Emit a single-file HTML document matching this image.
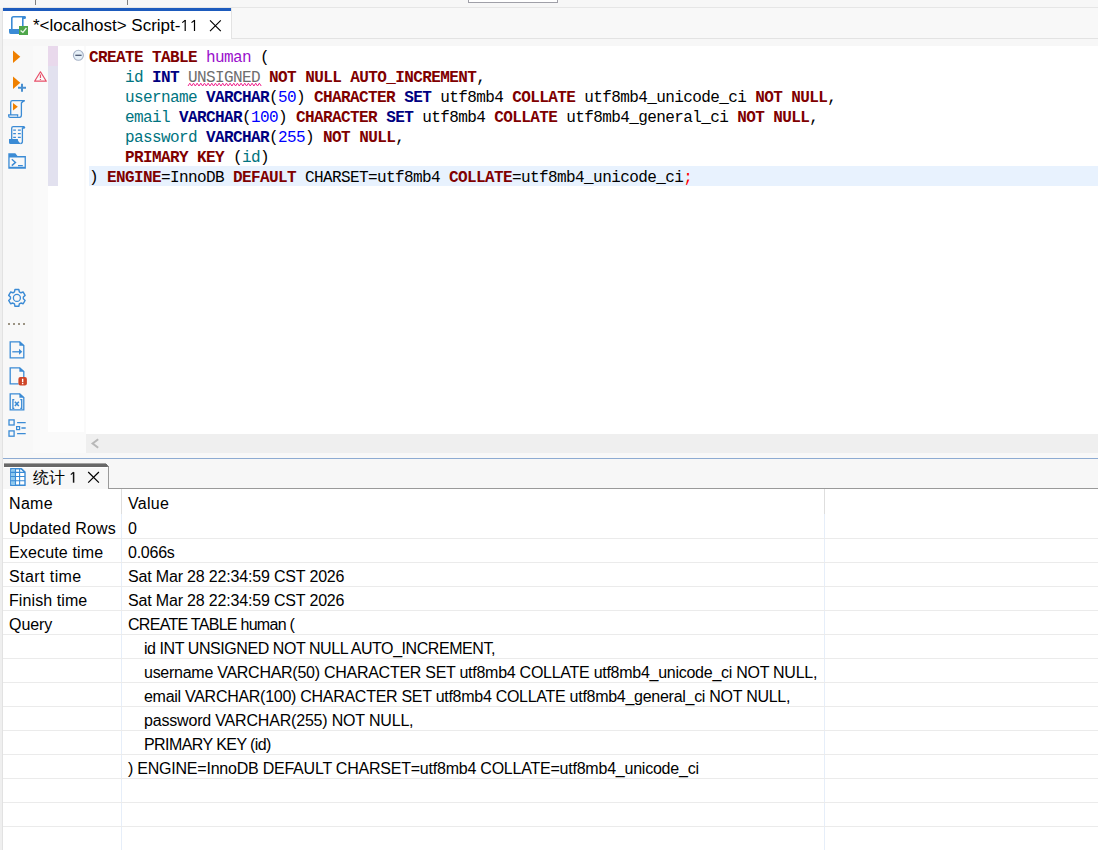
<!DOCTYPE html>
<html><head><meta charset="utf-8">
<style>
*{margin:0;padding:0;box-sizing:border-box}
html,body{width:1098px;height:850px;overflow:hidden;background:#f7f7f7;font-family:"Liberation Sans",sans-serif}
.a{position:absolute}
.code{font-family:"Liberation Mono",monospace;font-size:16px;letter-spacing:-0.6px;line-height:20px;white-space:pre;color:#000}
.k{color:#800000;font-weight:bold}
.t{color:#000080;font-weight:bold}
.c{color:#007480}
.n{color:#0000ff}
.p{color:#9a10cc}
.g{color:#6e6e6e}
.hl{left:3px;width:1095px;height:1px;background:#ebebeb}
.cell{font-size:16px;letter-spacing:-0.25px;line-height:20px;white-space:pre;color:#000}
</style></head><body>
<!-- top strip -->
<div class="a" style="left:0;top:0;width:1098px;height:8px;background:#f7f7f7"></div>
<div class="a" style="left:35px;top:0;width:1px;height:5px;background:#808080"></div>
<div class="a" style="left:127px;top:0;width:1px;height:5px;background:#808080"></div>
<div class="a" style="left:468px;top:0;width:90px;height:3px;background:#fff;border:1px solid #a0a0a8;border-top:none"></div>
<!-- left strip -->
<div class="a" style="left:0;top:8px;width:2px;height:842px;background:#efefef"></div>
<div class="a" style="left:2px;top:8px;width:1px;height:842px;background:#e2e2e2"></div>
<!-- tab bar -->
<div class="a" style="left:3px;top:7px;width:1095px;height:1px;background:#e6e6e6"></div>
<div class="a" style="left:3px;top:8px;width:1095px;height:31px;background:#f8f8f8;border-bottom:1px solid #e3e3e3"></div>
<div class="a" style="left:3px;top:8px;width:229px;height:31px;background:#fff;border-right:1px solid #e3e3e3"></div>
<div class="a" style="left:3px;top:8px;width:228px;height:3px;background:#1d5bbd"></div>
<div class="a" style="left:33px;top:16px;font-size:17px;letter-spacing:0px;line-height:20px;white-space:pre;color:#000">*&lt;localhost&gt; Script-</div>
<svg class="a" style="left:0;top:0" width="1098" height="850"><path d="M185.2 20 V30.9 M194.5 20 V30.9" stroke="#000" stroke-width="1.2"/><path d="M185.4 20.2 L182.2 22.6 M194.7 20.2 L191.5 22.6" stroke="#000" stroke-width="1.15"/></svg>
<!-- gray band -->
<div class="a" style="left:3px;top:39px;width:1095px;height:7px;background:#f7f7f7"></div>
<!-- editor -->
<div class="a" style="left:3px;top:46px;width:30px;height:407px;background:#f8f8f8"></div>
<div class="a" style="left:33px;top:46px;width:15px;height:388px;background:#fafafa"></div>
<div class="a" style="left:48px;top:46px;width:10px;height:20px;background:#e9d9ec"></div>
<div class="a" style="left:48px;top:66px;width:10px;height:120px;background:#e2e1ef"></div>
<div class="a" style="left:48px;top:186px;width:36px;height:246px;background:#fff"></div>
<div class="a" style="left:58px;top:46px;width:26px;height:140px;background:#fff"></div>
<div class="a" style="left:48px;top:432px;width:38px;height:21px;background:#fafafa"></div>
<div class="a" style="left:84px;top:46px;width:2px;height:388px;background:#fafafa"></div>
<div class="a" style="left:86px;top:46px;width:1012px;height:388px;background:#fff"></div>
<div class="a" style="left:89px;top:166px;width:1009px;height:20px;background:#e8f2fe"></div>
<div class="a code" style="left:89px;top:48px"><span class="k">CREATE</span> <span class="k">TABLE</span> <span class="p">human</span> (
    <span class="c">id</span> <span class="t">INT</span> <span class="g">UNSIGNED</span> <span class="k">NOT</span> <span class="k">NULL</span> <span class="k">AUTO_INCREMENT</span>,
    <span class="c">username</span> <span class="t">VARCHAR</span>(<span class="n">50</span>) <span class="k">CHARACTER</span> <span class="t">SET</span> utf8mb4 <span class="k">COLLATE</span> utf8mb4_unicode_ci <span class="k">NOT</span> <span class="k">NULL</span>,
    <span class="c">email</span> <span class="t">VARCHAR</span>(<span class="n">100</span>) <span class="k">CHARACTER</span> <span class="t">SET</span> utf8mb4 <span class="k">COLLATE</span> utf8mb4_general_ci <span class="k">NOT</span> <span class="k">NULL</span>,
    <span class="c">password</span> <span class="t">VARCHAR</span>(<span class="n">255</span>) <span class="k">NOT</span> <span class="k">NULL</span>,
    <span class="k">PRIMARY</span> <span class="k">KEY</span> (<span class="c">id</span>)
) <span class="k">ENGINE</span>=InnoDB <span class="k">DEFAULT</span> CHARSET=utf8mb4 <span class="k">COLLATE</span>=utf8mb4_unicode_ci<span style="color:#f00">;</span></div>
<!-- h scrollbar -->
<div class="a" style="left:33px;top:434px;width:53px;height:19px;background:#fafafa"></div>
<div class="a" style="left:86px;top:434px;width:1012px;height:19px;background:#efefef"></div>
<!-- band -->
<div class="a" style="left:3px;top:453px;width:1095px;height:5px;background:#f8f8f8"></div>
<div class="a" style="left:3px;top:458px;width:1095px;height:1px;background:#8eabd2"></div>
<!-- bottom panel -->
<div class="a" style="left:3px;top:459px;width:1095px;height:30px;background:#f7f7f7"></div>
<div class="a" style="left:3px;top:489px;width:1095px;height:361px;background:#fff"></div>
<div class="a" style="left:108px;top:488px;width:990px;height:1px;background:#9a9a9a"></div>
<div class="a" style="left:108px;top:466px;width:1px;height:23px;background:#9a9a9a"></div>
<div class="a" style="left:4px;top:463px;width:102px;height:1px;background:#a2a2a2"></div>
<div class="a" style="left:4px;top:464px;width:103px;height:3px;background:#686868"></div>
<div class="a" style="left:4px;top:467px;width:104px;height:1px;background:#fff"></div>
<div class="a" style="left:107px;top:465px;width:1px;height:2px;background:#7a7a7a"></div>
<div class="a" style="left:108px;top:466px;width:1px;height:1px;background:#8a8a8a"></div>
<div class="a" style="left:121px;top:489px;width:1px;height:25px;background:#dedede"></div>
<div class="a" style="left:121px;top:514px;width:1px;height:336px;background:#e6eef9"></div>
<div class="a" style="left:824px;top:489px;width:1px;height:25px;background:#dedede"></div>
<div class="a" style="left:824px;top:514px;width:1px;height:336px;background:#e6eef9"></div>
<div class="a" style="left:33px;top:468px;font-size:16px;line-height:20px;white-space:pre">统计</div>
<svg class="a" style="left:0;top:0" width="1098" height="850"><path d="M73.6 472.2 V482.7" stroke="#111" stroke-width="1.5"/><path d="M73.6 472.3 L70.8 474.6" stroke="#111" stroke-width="1.2"/></svg>
<!-- table -->
<div class="a hl" style="top:538px"></div>
<div class="a hl" style="top:562px"></div>
<div class="a hl" style="top:586px"></div>
<div class="a hl" style="top:610px"></div>
<div class="a hl" style="top:634px"></div>
<div class="a hl" style="top:658px"></div>
<div class="a hl" style="top:682px"></div>
<div class="a hl" style="top:706px"></div>
<div class="a hl" style="top:730px"></div>
<div class="a hl" style="top:754px"></div>
<div class="a hl" style="top:778px"></div>
<div class="a hl" style="top:802px"></div>
<div class="a hl" style="top:826px"></div>
<div class="a cell" style="left:9px;top:494px;letter-spacing:0.333px">Name</div>
<div class="a cell" style="left:128px;top:494px;letter-spacing:0.300px">Value</div>
<div class="a cell" style="left:9px;top:519px;letter-spacing:0.173px">Updated Rows</div>
<div class="a cell" style="left:128px;top:519px;letter-spacing:0.000px">0</div>
<div class="a cell" style="left:9px;top:543px;letter-spacing:0.155px">Execute time</div>
<div class="a cell" style="left:128px;top:543px;letter-spacing:-0.240px">0.066s</div>
<div class="a cell" style="left:9px;top:567px;letter-spacing:0.422px">Start time</div>
<div class="a cell" style="left:128px;top:567px;letter-spacing:-0.174px">Sat Mar 28 22:34:59 CST 2026</div>
<div class="a cell" style="left:9px;top:591px;letter-spacing:0.090px">Finish time</div>
<div class="a cell" style="left:128px;top:591px;letter-spacing:-0.174px">Sat Mar 28 22:34:59 CST 2026</div>
<div class="a cell" style="left:9px;top:615px;letter-spacing:-0.050px">Query</div>
<div class="a cell" style="left:128px;top:615px;letter-spacing:-0.716px">CREATE TABLE human (</div>
<div class="a cell" style="left:144px;top:639px;letter-spacing:-0.433px">id INT UNSIGNED NOT NULL AUTO_INCREMENT,</div>
<div class="a cell" style="left:144px;top:663px;letter-spacing:-0.267px">username VARCHAR(50) CHARACTER SET utf8mb4 COLLATE utf8mb4_unicode_ci NOT NULL,</div>
<div class="a cell" style="left:144px;top:687px;letter-spacing:-0.278px">email VARCHAR(100) CHARACTER SET utf8mb4 COLLATE utf8mb4_general_ci NOT NULL,</div>
<div class="a cell" style="left:144px;top:711px;letter-spacing:-0.183px">password VARCHAR(255) NOT NULL,</div>
<div class="a cell" style="left:144px;top:735px;letter-spacing:-0.573px">PRIMARY KEY (id)</div>
<div class="a cell" style="left:128px;top:759px;letter-spacing:-0.225px">) ENGINE=InnoDB DEFAULT CHARSET=utf8mb4 COLLATE=utf8mb4_unicode_ci</div>
<svg class="a" style="left:0;top:0" width="1098" height="850" viewBox="0 0 1098 850">
<!-- tab script icon -->
<g fill="none" stroke="#3b8bd5" stroke-width="1.6">
<path d="M11.8 29.5 V18.5 Q11.8 16.8 13.5 16.8 H24.5"/>
<path d="M22.8 17 V27"/>
</g>
<path d="M23 16 H25 Q26 16 26 17.5 Q26 19 24.5 19 H23 Z" fill="#3b8bd5"/>
<path d="M9 29 H19.5 V34 H10.5 Q9 34 9 32 Z" fill="#3b8bd5"/>
<rect x="19" y="26" width="9" height="9" fill="#4ea64a"/>
<path d="M20.6 30.4 L22.9 32.4 L26.4 28" fill="none" stroke="#e8f5e8" stroke-width="1.3"/>
<!-- tab close X -->
<path d="M210 20.3 L220.8 31.1 M220.8 20.3 L210 31.1" stroke="#000" stroke-width="1.15"/>
<!-- run -->
<path d="M13 50.5 L20.3 56.8 L13 63 Z" fill="#ef8000"/>
<path d="M13 76.5 L20.3 82.8 L13 89 Z" fill="#ef8000"/>
<path d="M18 87.7 H26 M22 83.8 V91.8" stroke="#4a90d0" stroke-width="2"/>
<!-- script with play -->
<g fill="none" stroke="#3b8bd5" stroke-width="1.3">
<path d="M10.7 114.5 V102.5 Q10.7 100.7 12.5 100.7 H24.8 Q22.5 101.5 21.4 103 V115 Q21.4 117.3 19.5 117.3 H10 Q8.7 117.3 8.7 116 V114.8 H17.6 V116.5"/>
</g>
<path d="M13 103 L17.8 106.7 L13 110.4 Z" fill="#ef8000"/>
<!-- script with lines -->
<g fill="none" stroke="#3b8bd5" stroke-width="1.3">
<path d="M11.7 139.5 V128.2 Q11.7 126.7 13.2 126.7 H23.5"/>
<path d="M22.4 127.5 V141.5 Q22.4 143.5 20.5 143.5"/>
<path d="M13.2 130.2 H15.9 M17.9 130.2 H20.8 M13.2 133.6 H15.9 M17.9 133.6 H20.8 M13.2 137.4 H15.9 M17.9 137.4 H20.8"/>
</g>
<path d="M22.5 126 H23.8 Q25.2 126 25.2 127.5 Q25.2 128.8 23.8 128.8 H22.5 Z" fill="#3b8bd5"/>
<path d="M9 139 H17.8 Q17.8 141.5 19.5 142.5 L21 143.9 H10.5 Q9 143.9 9 142.4 Z" fill="#3b8bd5"/>
<!-- terminal -->
<path d="M8.3 153.2 H15.3 L17.5 156.1 H25.9 V168.8 H8.3 Z M9.6 157.4 V166.8 H24.6 V157.4 Z" fill="#3b8bd5" fill-rule="evenodd"/>
<path d="M11.8 159.2 L15.5 162.4 L11.8 165.6 M18 165.6 H22.8" fill="none" stroke="#3b8bd5" stroke-width="1.4"/>
<!-- warning -->
<path d="M40.45 71.8 L46.3 81.2 H34.6 Z" fill="none" stroke="#e8506a" stroke-width="1.2" stroke-linejoin="round"/>
<path d="M40.45 74.6 V78 M40.45 79.1 V80.1" stroke="#e8506a" stroke-width="1.2"/>
<!-- fold -->
<circle cx="78.4" cy="55.3" r="5" fill="#e6f0f8" stroke="#a6b2c6" stroke-width="1.1"/>
<path d="M75.3 55.3 H81.6" stroke="#4a5670" stroke-width="1.3"/>
<!-- gear -->
<g transform="translate(16.9 297.9)" fill="none" stroke="#3b8bd5" stroke-width="1.4" stroke-linejoin="round">
<path id="gearp" d="M-2.43 -6.03 L-1.93 -8.38 L1.93 -8.38 L2.43 -6.03 L4.00 -5.12 L6.29 -5.87 L8.22 -2.51 L6.44 -0.90 L6.44 0.90 L8.22 2.51 L6.29 5.87 L4.00 5.12 L2.43 6.03 L1.93 8.38 L-1.93 8.38 L-2.43 6.03 L-4.00 5.12 L-6.29 5.87 L-8.22 2.51 L-6.44 0.90 L-6.44 -0.90 L-8.22 -2.51 L-6.29 -5.87 L-4.00 -5.12 Z"/>
<circle r="3.5" stroke-width="1.3"/>
</g>
<!-- dots -->
<g fill="#9c9484"><rect x="8" y="323" width="2" height="2"/><rect x="13" y="323" width="2" height="2"/><rect x="18" y="323" width="2" height="2"/><rect x="23" y="323" width="2" height="2"/></g>
<!-- doc arrow -->
<g fill="none" stroke="#3b8bd5" stroke-width="1.3">
<path d="M10.2 341.9 H19.8 L23.8 345.6 V357.9 H10.2 Z"/>
<path d="M12.3 351.8 H19.5"/>
</g>
<path d="M19.4 341.5 L24.3 345.8 H19.4 Z" fill="#3b8bd5"/>
<path d="M19 348.8 L22.3 351.8 L19 354.8 Z" fill="#3b8bd5"/>
<!-- doc err -->
<g fill="none" stroke="#3b8bd5" stroke-width="1.3">
<path d="M18.5 383.9 H10.2 V367.9 H19.8 L23.8 371.6 V377.5"/>
</g>
<path d="M19.4 367.5 L24.3 371.8 H19.4 Z" fill="#3b8bd5"/>
<rect x="18.4" y="377" width="8.5" height="8.5" rx="2" fill="#cf4527"/>
<path d="M22.65 378.8 V382.2 M22.65 383 V384.2" stroke="#fff" stroke-width="1.4"/>
<!-- doc x -->
<g fill="none" stroke="#3b8bd5" stroke-width="1.3">
<path d="M10.2 393.9 H19.8 L23.8 397.6 V409.9 H10.2 Z"/>
<path d="M14.3 399.6 H12.9 V408.4 H14.3 M20.3 399.6 H21.7 V408.4 H20.3"/>
<path d="M14.9 401.7 L18.8 406.1 M18.8 401.7 L14.9 406.1" stroke-width="1.5"/>
</g>
<path d="M19.4 393.5 L24.3 397.8 H19.4 Z" fill="#3b8bd5"/>
<!-- list -->
<g fill="none" stroke="#3b8bd5" stroke-width="1.4">
<rect x="9" y="419.9" width="5.1" height="5.1" stroke-width="1.3"/>
<rect x="9" y="430.9" width="5.1" height="5.3" stroke-width="1.3"/>
<path d="M17.1 422.6 H25.7 M21.4 428 H25.7 M17.1 433.6 H25.7"/>
</g>
<rect x="16.6" y="426.6" width="3" height="3" fill="none" stroke="#3b8bd5" stroke-width="1.2"/>
<!-- scroll arrow -->
<path d="M98.2 439.3 L92.6 443.5 L98.2 447.7" fill="none" stroke="#b8b8b8" stroke-width="2"/>
<!-- table icon -->
<path d="M10.8 468.8 H21.3 L25 472.3 V485.3 H10.8 Z" fill="#fff" stroke="#3b8bd5" stroke-width="1.4"/>
<rect x="11.5" y="469.5" width="3.7" height="15.2" fill="#8ec9ee"/>
<path d="M15.5 468.5 V485.5 M19.6 468.5 V485.5 M10.5 472.4 H25 M10.5 476.5 H25 M10.5 480.7 H25" stroke="#3b8bd5" stroke-width="1.1"/>
<path d="M21.3 468.8 L25 472.3" stroke="#3b8bd5" stroke-width="1.4"/>
<!-- bottom X -->
<path d="M88.2 472 L98.9 482.7 M98.9 472 L88.2 482.7" stroke="#000" stroke-width="1.2"/>
<!-- squiggle -->
<polyline points="188.00,86 189.83,83.2 191.66,86 193.49,83.2 195.32,86 197.15,83.2 198.98,86 200.81,83.2 202.64,86 204.47,83.2 206.30,86 208.13,83.2 209.96,86 211.79,83.2 213.62,86 215.45,83.2 217.28,86 219.11,83.2 220.94,86 222.77,83.2 224.60,86 226.43,83.2 228.26,86 230.09,83.2 231.92,86 233.75,83.2 235.58,86 237.41,83.2 239.24,86 241.07,83.2 242.90,86 244.73,83.2 246.56,86 248.39,83.2 250.22,86 252.05,83.2 253.88,86 255.71,83.2 257.54,86 259.37,83.2 261.20,86" fill="none" stroke="#f0208c" stroke-width="1"/>
</svg>
</body></html>
